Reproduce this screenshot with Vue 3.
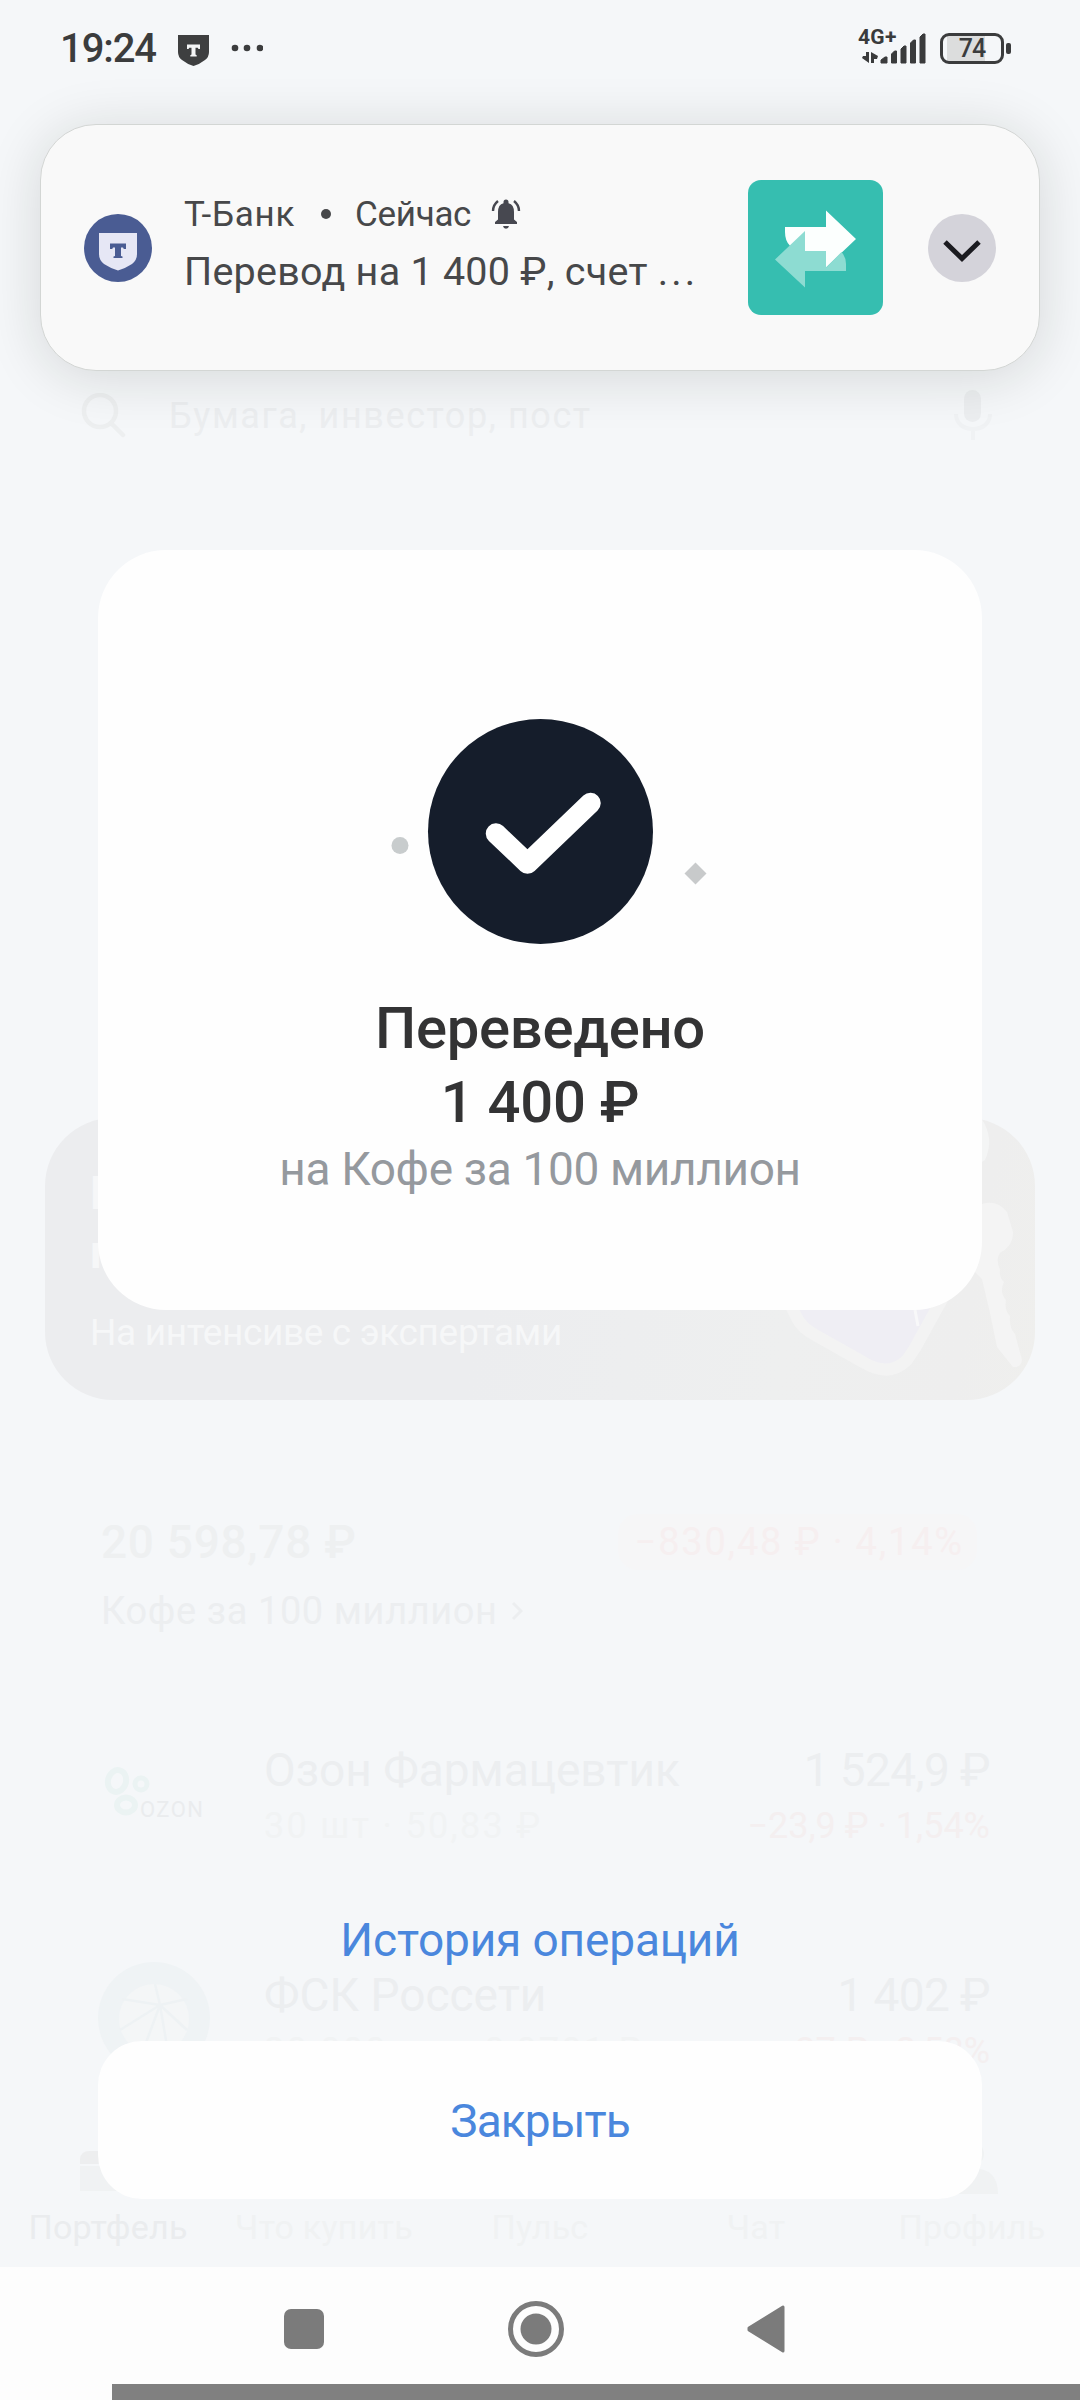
<script setup>
const positions = [
  { logo: 'ozon', name: 'Озон Фармацевтик', detail: '30 шт · 50,83 ₽', total: '1 524,9 ₽', change: '−23,9 ₽ · 1,54%' },
  { logo: 'grid', name: 'ФСК Россети', detail: '20 000 шт · 0,0701 ₽', total: '1 402 ₽', change: '−37 ₽ · 2,58%' },
]
const tabs = [
  { label: 'Портфель', icon: 'case', active: true },
  { label: 'Что купить' },
  { label: 'Пульс' },
  { label: 'Чат' },
  { label: 'Профиль', icon: 'person' },
]
</script>

<template>
  <div class="screen">
    <div class="backdrop">
      <div class="search">
        <svg width="46" height="46" viewBox="0 0 46 46" fill="none" stroke="#edeff0" stroke-width="4.500">
          <circle cx="20" cy="18" r="16" /><path d="M31 30 43 42" stroke-linecap="round" />
        </svg>
        <span class="search-text">Бумага, инвестор, пост</span>
        <svg width="40" height="56" viewBox="0 0 40 56">
          <rect x="11" y="2" width="17" height="32" rx="8.5" fill="#eceef0" />
          <path d="M3 26c0 9 7 15 17 15s17-6 17-15M20 41v11" fill="none" stroke="#f0f2f4" stroke-width="4" />
        </svg>
      </div>

      <div class="banner">
        <div class="banner-copy">
          <strong>П<br>п</strong>
          <span>На интенсиве с экспертами</span>
        </div>
        <svg class="banner-art" width="320" height="282" viewBox="0 0 320 282">
          <path d="M72 180 L82 200 Q87 210 100 217 L148 244 Q174 260 192 242 L200 230 L232 172 Z" fill="#efeef4" stroke="#f3f3f3" stroke-width="12" stroke-linejoin="round" />
          <path d="M200 192l3 16" stroke="#f8f8f9" stroke-width="3" />
          <path d="M266 0q14 20 4 42l-20 12V0z" fill="#f4f5f5" />
          <path d="M262 88q18-9 30 6l6 20q0 14-12 20-6 6-1 18-1 8 4 12-5 10 2 18-2 10 4 16-1 12 5 18l7 26q-1 8-9 7l-16-20-7-34-8-34-8-8z" fill="#f4f4f4" />
        </svg>
      </div>

      <div class="summary">
        <div class="summary-top">
          <span class="balance">20 598,78 ₽</span>
          <span class="pill">−830,48 ₽ · 4,14%</span>
        </div>
        <div class="account">
          <span>Кофе за 100 миллион</span>
          <svg width="12" height="20" viewBox="0 0 12 20" fill="none" stroke="#eceef0" stroke-width="3"><path d="M2 2l8 8-8 8" /></svg>
        </div>
      </div>

      <div class="positions">
        <div v-for="p in positions" :key="p.name" class="position">
          <svg v-if="p.logo === 'ozon'" width="112" height="112" viewBox="0 0 112 112">
            <g fill="none" stroke="#ebf3f3">
              <ellipse cx="19" cy="44" rx="9" ry="11" stroke-width="6" transform="rotate(15 19 44)" />
              <circle cx="43" cy="47" r="6" stroke-width="5" />
              <ellipse cx="28" cy="68" rx="9" ry="7.500" stroke-width="6" />
            </g>
            <text x="42" y="80" class="ozon" textLength="63">OZON</text>
          </svg>
          <svg v-else width="112" height="112" viewBox="0 0 112 112">
            <circle cx="56" cy="56" r="56" fill="#eff3f5" />
            <circle cx="56" cy="57" r="35" fill="#f4f6f7" />
            <path d="M62 43 57 22M62 43 24 37M62 43 89 37M62 43 22 68M62 43 46 86M62 43 70 90M62 43 89 68" stroke="#eef2f4" stroke-width="2.5" fill="none" />
          </svg>
          <div class="col">
            <span class="name">{{ p.name }}</span>
            <span class="detail">{{ p.detail }}</span>
          </div>
          <div class="col right">
            <span class="total">{{ p.total }}</span>
            <span class="change">{{ p.change }}</span>
          </div>
        </div>
      </div>

      <div class="tabs">
        <div v-for="t in tabs" :key="t.label" class="tab" :class="{ active: t.active }">
          <svg v-if="t.icon === 'case'" width="56" height="54" viewBox="0 0 56 54" fill="#edeeef">
            <path d="M0 24V19q1-8 9-8h38q8 0 9 8v5z" /><path d="M0 26h56v25H0z" fill="#f0f2f3" />
          </svg>
          <svg v-else-if="t.icon === 'person'" width="52" height="54" viewBox="0 0 52 54" fill="#f0f2f3">
            <circle cx="26" cy="14" r="12" /><path d="M0 54q0-26 26-26t26 26z" />
          </svg>
          <i v-else></i>
          <span>{{ t.label }}</span>
        </div>
      </div>
    </div>

    <div class="result">
      <div class="card">
        <svg width="330" height="225" viewBox="0 0 330 225">
          <circle cx="164.500" cy="112.500" r="112.500" fill="#151d2b" />
          <path d="M120 114.500 151.500 144.500 214.500 84" fill="none" stroke="#fff" stroke-width="20.500" stroke-linecap="round" stroke-linejoin="round" />
          <circle cx="24" cy="126.500" r="8.500" fill="#c8cccd" />
          <path d="M319.500 143.500l11 11-11 11-11-11z" fill="#c8cacb" />
        </svg>
        <h1>Переведено<br>1 400 ₽</h1>
        <p>на Кофе за 100 миллион</p>
      </div>
      <a class="history">История операций</a>
      <button class="close">Закрыть</button>
    </div>

    <div class="statusbar">
      <span class="time">19:24</span>
      <svg class="shield" width="31" height="31" viewBox="0 0 31 31">
        <path d="M0 0h31v17q0 5-4 8-5 4-11.500 6Q9 29 4 25q-4-3-4-8z" fill="#3e3f40" />
        <path d="M9 9.500h13v4.500h-1.500l-.8-1.200h-2.200v6.700l1.200.8v1.200h-6.400v-1.200l1.200-.8v-6.700h-2.200l-.8 1.200H9z" fill="#f4f5f6" />
      </svg>
      <svg width="32" height="8" viewBox="0 0 32 8" fill="#3c3d3e"><circle cx="4" cy="4" r="3.300" /><circle cx="16" cy="4" r="3.300" /><circle cx="29" cy="4" r="3.300" /></svg>
      <div class="signal">
        <span class="net">4G+</span>
        <svg width="64" height="32" viewBox="0 0 64 32" fill="#3a3b3c">
          <path d="M4 20h3v11L0 26l1-2h3zM9 31V20l7 4-1 3h-3v4z" />
          <path d="M19 31v-3l4-3h2v6zM29.500 31V22l3-3h2v12zM39 31V17l3-3h2v17zM48.500 31V11l3-3h2v23zM58 31V5l3-3h2v29z" stroke="#3a3b3c" stroke-width="1" stroke-linejoin="round" />
        </svg>
      </div>
      <div class="battery"><span>74</span></div>
      <i class="nub"></i>
    </div>

    <div class="notification">
      <svg width="68" height="68" viewBox="0 0 68 68">
        <circle cx="34" cy="34" r="34" fill="#4a5c93" />
        <path d="M15 19h38v21q0 6-5 10-6 4-14 6.500-8-2.500-14-6.500-5-4-5-10z" fill="#e6e7f5" />
        <path d="M26 29.500h16V35h-2.200l-.8-1.500h-2v8.500l1.500.5v1.500h-9v-1.500l1.500-.5v-8.500h-2L28.200 35H26z" fill="#4a5c93" />
      </svg>
      <div class="note-text">
        <div class="note-head">
          <span class="app">Т-Банк</span><i></i><span>Сейчас</span>
          <svg width="30" height="30" viewBox="0 0 30 30" fill="#474850">
            <path d="M4 25v-2l3-2.500V13q0-7.500 5.500-8.800V3Q12.500.5 15 .5t2.500 2.500v1.200Q23 5.500 23 13v7.500l3 2.500v2zM12 27h6q-.5 2.700-3 2.700T12 27z" />
            <path d="M2 12q0-6 5-10M28 12q0-6-5-10" fill="none" stroke="#474850" stroke-width="2.400" />
          </svg>
        </div>
        <div class="note-body">Перевод на 1 400 ₽, счет <span class="dots">...</span></div>
      </div>
      <svg class="transfer" width="135" height="135" viewBox="0 0 135 135">
        <rect width="135" height="135" rx="13" fill="#36beb0" />
        <path d="M37 47h41V30.500L108 59 78 87.500V71H57q-20-1-20-19z" fill="#fcfffe" />
        <path d="M27 79.500 57 51v20h21v16.500L93.500 72q4.500 5 4.500 12v7H57v16.500z" fill="#8ddcd2" />
      </svg>
      <svg width="68" height="68" viewBox="0 0 68 68">
        <circle cx="34" cy="34" r="34" fill="#d4d3da" />
        <path d="M17 28 34 44.500 51 28" fill="none" stroke="#1b1b20" stroke-width="5" />
      </svg>
    </div>

    <div class="navbar">
      <svg width="40" height="40" viewBox="0 0 40 40"><rect width="40" height="40" rx="7" fill="#7b7b7b" /></svg>
      <svg width="56" height="56" viewBox="0 0 56 56"><circle cx="28" cy="28" r="25.500" fill="none" stroke="#7b7b7b" stroke-width="5" /><circle cx="28" cy="28" r="15.500" fill="#7b7b7b" /></svg>
      <svg width="39" height="48" viewBox="0 0 39 48"><path d="M2 23 36 2v44L2 25z" fill="#7b7b7b" stroke="#7b7b7b" stroke-width="3" stroke-linejoin="round" /></svg>
      <div class="strip"></div>
    </div>
  </div>
</template>

<style>
body { margin: 0; background: #f5f7f9; }
</style>

<style scoped>
.screen {
  position: relative;
  width: 1080px;
  height: 2400px;
  overflow: hidden;
  background: #f5f7f9;
  font-family: Roboto, "Noto Sans", sans-serif;
}
svg { display: block; flex: none; }
span { white-space: nowrap; }

/* faded portfolio page */
.backdrop { display: flex; flex-direction: column; padding-top: 376px; }
.search { height: 80px; display: flex; align-items: center; padding: 0 87px 0 80px; }
.search-text { flex: 1; margin-left: 43px; font-size: 36px; letter-spacing: 1.6px; color: #eceef0; }
.banner {
  display: flex;
  justify-content: space-between;
  margin: 662px 45px 0;
  height: 282px;
  border-radius: 68px;
  overflow: hidden;
  background: linear-gradient(100deg, #ecedef 45%, #eeefef 75%, #eeeeee 92%, #efefed);
}
.banner-copy { display: flex; flex-direction: column; padding: 46px 0 0 45px; color: #f6f7f8; }
.banner-copy strong { font-size: 46px; line-height: 59px; font-weight: 700; }
.banner-copy span { margin-top: 25px; font-size: 37px; line-height: 51px; letter-spacing: -0.35px; }
.summary { margin: 112px 103px 0 101px; }
.summary-top { height: 60px; display: flex; justify-content: space-between; align-items: center; }
.balance { font-size: 46px; font-weight: 500; letter-spacing: 0.7px; color: #eef0f1; }
.pill {
  height: 56px;
  line-height: 57px;
  padding: 0 13px 0 17px;
  border-radius: 20px;
  background: #f6f6f7;
  color: #f6eff0;
  font-size: 38px;
  letter-spacing: 1.8px;
}
.account { margin-top: 14px; height: 50px; display: flex; align-items: center; gap: 13px; font-size: 38px; letter-spacing: 0.6px; color: #eceef0; }
.positions { margin: 101px 90px 0 98px; display: flex; flex-direction: column; gap: 113px; }
.position { display: flex; height: 112px; }
.col { display: flex; flex-direction: column; margin-left: 54px; }
.right { margin-left: auto; align-items: flex-end; }
.name, .total { font-size: 46px; line-height: 67px; color: #eceef0; }
.total { letter-spacing: -0.6px; }
.detail, .change { font-size: 36px; line-height: 44px; }
.detail { letter-spacing: 2.3px; color: #f1f3f4; }
.change { color: #f4eff0; }
.ozon { font-size: 22px; fill: #eaecee; }
.tabs { margin-top: 66px; display: flex; }
.tab { width: 216px; display: flex; flex-direction: column; align-items: center; gap: 13px; font-size: 34px; line-height: 40px; letter-spacing: 0.25px; color: #f0f2f3; }
.tab i { height: 54px; }
.tab.active { color: #eaecee; }

/* transfer result */
.result { position: absolute; inset: 550px 98px auto; display: flex; flex-direction: column; text-align: center; }
.card { height: 760px; box-sizing: border-box; padding-top: 169px; border-radius: 68px; background: #fefefe; display: flex; flex-direction: column; align-items: center; }
.card svg { margin-left: 1px; overflow: visible; }
.card h1 { margin: 47px 0 0; font-size: 58px; line-height: 74px; font-weight: 500; letter-spacing: -0.3px; color: #333334; }
.card p { margin: 0; font-size: 46px; line-height: 60px; letter-spacing: -0.35px; color: #95999e; }
.history { margin-top: 600px; font-size: 46px; line-height: 60px; letter-spacing: -0.15px; color: #4a87dd; }
.close { margin-top: 71px; height: 158px; padding: 2px 0 0; border: 0; border-radius: 44px; background: #fefefe; font: 46px Roboto, sans-serif; letter-spacing: -0.9px; color: #4a87dd; }

/* system chrome */
.statusbar { position: absolute; inset: 0 0 auto; height: 96px; display: flex; align-items: center; padding: 0 69px 0 60px; }
.time { width: 118px; font-size: 40px; font-weight: 500; letter-spacing: -1.1px; color: #3b3c3d; }
.shield { margin: 4px 22px 0 0; }
.signal { display: flex; align-items: flex-start; margin: 0 14px 0 auto; }
.net { width: 41px; margin: -7px -37px 0 0; font-size: 21px; line-height: 24px; font-weight: 700; letter-spacing: 0.3px; color: #3a3b3c; }
.battery { box-sizing: border-box; width: 64px; height: 31px; border: 3.5px solid #3b3c3d; border-radius: 9px; background: linear-gradient(90deg, transparent 4px, #dcdddd 4px 42px, transparent 42px); text-align: center; line-height: 25px; font-size: 25px; font-weight: 500; letter-spacing: -1px; color: #3b3c3d; }
.nub { width: 5px; height: 11px; margin-left: 2px; border-radius: 2px; background: #3b3c3d; }
.notification {
  position: absolute;
  inset: 124px 40px auto;
  height: 247px;
  box-sizing: border-box;
  display: flex;
  align-items: center;
  padding: 0 43px;
  border: 1px solid #d3d6d4;
  border-radius: 56px;
  background: #f9f9f9;
  box-shadow: 0 6px 56px rgba(20, 25, 20, 0.14);
  color: #47484a;
}
.note-text { width: 565px; margin-left: 31px; padding-bottom: 9px; }
.note-head { display: flex; align-items: center; height: 57px; padding-left: 1px; font-size: 35px; }
.note-head .app { letter-spacing: 0.7px; }
.note-head i { width: 10px; height: 10px; margin: 0 24px 0 26px; border-radius: 50%; background: #47484a; }
.note-head span:nth-of-type(2) { letter-spacing: -0.3px; }
.note-head svg { margin-left: 20px; }
.note-body { padding-left: 1px; font-size: 39.5px; line-height: 58px; letter-spacing: 0.25px; white-space: nowrap; }
.dots { letter-spacing: 3px; }
.transfer { margin-right: 45px; }
.navbar { position: absolute; inset: 2267px 0 0; display: flex; align-items: flex-start; background: #fdfdfd; }
.navbar svg:nth-child(1) { margin: 42px 0 0 284px; }
.navbar svg:nth-child(2) { margin: 34px 0 0 184px; }
.navbar svg:nth-child(3) { margin: 38px 0 0 183px; }
.strip { position: absolute; inset: 117px 0 0 112px; background: #808080; }
</style>
